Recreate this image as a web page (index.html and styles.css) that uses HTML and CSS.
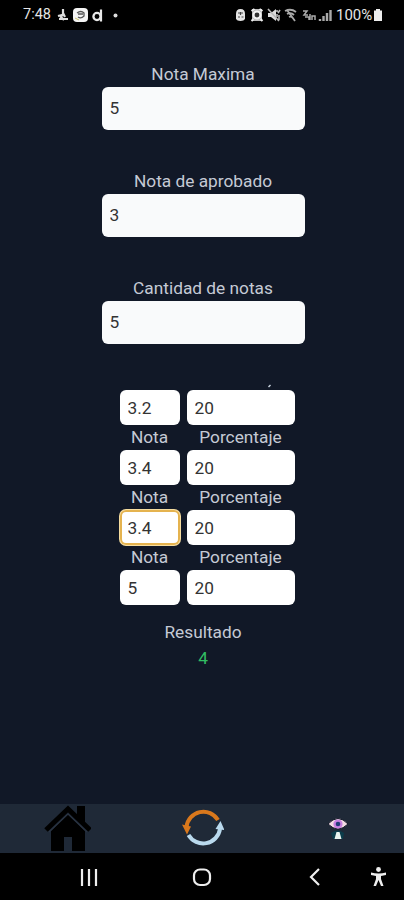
FILE: index.html
```
<!DOCTYPE html>
<html lang="es">
<head>
<meta charset="utf-8">
<title>Calculadora de notas</title>
<link rel="stylesheet" href="styles.css">
</head>
<body>
<header class="status">
  <span class="clock">7:48</span>
  <svg class="left-icons" width="66" height="20" viewBox="0 0 66 20">
    <path d="M8 4v5l-2 3 3 3M3 11l4-1M4 14h9M8 8l2 4" fill="none" stroke="#ddd" stroke-width="2.200"/>
    <rect x="18" y="3" width="15" height="14" rx="4" fill="#f4f4f4"/>
    <path d="M22 8q4-3 7 0v3q-3 3-6 1M23 9h5" fill="none" stroke="#555" stroke-width="1.300"/>
    <path d="M20 13l4 2" stroke="#c8c36a"/>
    <circle cx="42" cy="11.500" r="3.600" fill="none" stroke="#e8e8e8" stroke-width="2.300"/>
    <path d="M46 4.500v12" stroke="#e8e8e8" stroke-width="2.200"/>
    <circle cx="60.500" cy="10.500" r="2" fill="#ddd"/>
  </svg>
  <svg class="right-icons" width="98" height="20" viewBox="0 0 98 20">
    <path d="M1 9q0-5 4.500-5T10 9v5q-1 2-4.500 2T1 14z" fill="#e4e4e4"/>
    <path d="M3 8h5M5.500 7v3M3 12h2M6.500 12h2" stroke="#444" stroke-width="1.200"/>
    <path d="M17 4h10v12H17z" fill="#bbb"/>
    <path d="M16.500 6l3-2M27.500 6l-3-2M18.500 14l-2 2M25.500 14l2 2" stroke="#eee" stroke-width="2"/>
    <circle cx="22" cy="10" r="3.500" fill="#333" stroke="#f4f4f4" stroke-width="2.200"/>
    <path d="M33 8h3l5-4v12l-5-4h-3z" fill="#ddd"/>
    <path d="M33 4l11 12M42 5v2M42 9v3M45 5l-2 3M44 10v5" stroke="#bbb" stroke-width="1.600"/>
    <path d="M50 6q6-3 11 1M52 9q4-2 7 1M54 12q2-1 4 1M52 5l8 11" fill="none" stroke="#aaa" stroke-width="1.800"/>
    <path d="M68 6h4l-3 4h4M70 12h4v3M75 9v6M77 15v-4h3v4" fill="none" stroke="#aaa" stroke-width="1.500"/>
    <path d="M85 16v-2M88.500 16v-5M92 16V8M95.500 16V5" stroke="#aaa" stroke-width="2.400"/>
  </svg>
  <span class="percent">100%</span>
  <svg width="10" height="14" viewBox="0 0 10 14"><path d="M3 1h4v1.500h2V13H1V2.500h2z" fill="#eee"/></svg>
</header>
<main>
  <div class="field"><label for="max">Nota Maxima</label><input id="max" value="5"></div>
  <div class="field"><label for="pass">Nota de aprobado</label><input id="pass" value="3"></div>
  <div class="field"><label for="count">Cantidad de notas</label><input id="count" value="5"></div>
  <section class="grades">
    <div class="clipped"><svg width="6" height="5" viewBox="0 0 6 5"><path d="M1.500 4l2-2" stroke="#cbd5e1" stroke-width="1.500"/></svg></div>
    <div class="row"><input value="3.2" aria-label="Nota"><input value="20" aria-label="Porcentaje"></div>
    <div class="row names"><span>Nota</span><span>Porcentaje</span></div>
    <div class="row"><input value="3.4" aria-label="Nota"><input value="20" aria-label="Porcentaje"></div>
    <div class="row names"><span>Nota</span><span>Porcentaje</span></div>
    <div class="row"><input class="active" value="3.4" aria-label="Nota"><input value="20" aria-label="Porcentaje"></div>
    <div class="row names"><span>Nota</span><span>Porcentaje</span></div>
    <div class="row"><input value="5" aria-label="Nota"><input value="20" aria-label="Porcentaje"></div>
  </section>
  <section class="result"><span>Resultado</span><span class="value">4</span></section>
</main>
<nav class="tabs">
  <svg width="48" height="48" viewBox="0 0 48 48">
    <path d="M34 1h8v17l-8-7z"/>
    <path d="M3 25L25 4l22 21" fill="none" stroke="#000" stroke-width="5"/>
    <path d="M8 26L25 9l17 17v20H29V32h-8v14H8z"/>
    <path d="M6 27L25 9l19 18" fill="none" stroke="#293342" stroke-width="1.200"/>
  </svg>
  <svg width="44" height="44" viewBox="0 0 44 44">
    <path d="M6.500 20A17 17 0 0 1 38 13" fill="none" stroke="#d9781c" stroke-width="4"/>
    <path d="M2 17.500l9 2-4 8z" fill="#d9781c"/>
    <path d="M8.500 28A17 17 0 0 0 40 22" fill="none" stroke="#b9d9ed" stroke-width="4"/>
    <path d="M40.500 14l4 9-9-1z" fill="#b9d9ed"/>
  </svg>
  <svg width="24" height="28" viewBox="0 0 24 28">
    <path d="M3 9q10-11 20 0-10 10-20 0z" fill="#f3dce3" stroke="#101827"/>
    <circle cx="13" cy="9" r="4.600" fill="#c77fe0"/><circle cx="13" cy="9" r="2.300" fill="#233b78"/>
    <path d="M6 18q7-5 13 0l-1 6H8z" fill="#0c3d4b"/>
    <path d="M11.500 17h3l2 7h-7z" fill="#e9f4ef"/>
  </svg>
</nav>
<footer class="system">
  <svg width="404" height="47" viewBox="0 0 404 47" fill="none" stroke="#eee" stroke-width="2.200">
    <path d="M82 16v17M89 16v17M96 16v17"/>
    <rect x="194" y="16.500" width="16" height="15.500" rx="6"/>
    <path d="M319 16l-8 8 8 8"/>
    <circle cx="378.500" cy="16.500" r="2.400" fill="#eee" stroke="none"/>
    <path d="M371 19.500q7.500 2 15 0v2.500l-5 1v3l2.500 7h-2.500l-2.500-6-2.500 6h-2.500l2.500-7v-3l-5-1z" fill="#eee" stroke="none"/>
  </svg>
</footer>
</body>
</html>
```
FILE: styles.css
```
* { box-sizing: border-box; }
body {
  margin: 0;
  width: 404px;
  height: 900px;
  display: flex;
  flex-direction: column;
  overflow: hidden;
  background: #111827;
  color: #c5cad5;
  font: 17.3px/24px Roboto, sans-serif;
}
svg { display: block; flex: none; }
.status {
  height: 30px;
  padding-left: 23px;
  display: flex;
  align-items: center;
  background: #000;
  color: #e5e5e5;
  font-size: 14.5px;
}
.clock { width: 32px; }
.right-icons { margin-left: 114px; }
.percent { width: 37px; margin-left: 3px; font-size: 15px; }
main {
  flex: 1;
  display: flex;
  flex-direction: column;
  align-items: center;
  padding: 32px 0 0 2px;
}
.field {
  width: 203px;
  height: 68px;
  margin-bottom: 39px;
  text-align: center;
}
.field label { display: block; height: 25px; }
input {
  display: block;
  width: 100%;
  height: 35px;
  padding: 0 8px;
  border: 0;
  border-radius: 6px;
  outline: 0;
  background: #fff;
  color: #333;
  font: 17.3px Roboto, sans-serif;
}
.field input { height: 43px; padding-bottom: 2px; background: #f9fafb; }
.grades { width: 175px; margin: 0 0 0 8px; }
.clipped { height: 7px; padding: 0 0 0 147px; }
.row {
  display: grid;
  grid-template-columns: 60px 108px;
  gap: 7px;
  height: 35px;
}
.names { height: 25px; text-align: center; }
.active { box-shadow: 0 0 0 1px #f6dda0, inset 0 0 0 2px #e5b34f; }
.result {
  margin-top: 15px;
  display: flex;
  flex-direction: column;
  align-items: center;
  gap: 2px;
}
.value { color: #32bd63; }
.tabs {
  height: 49px;
  display: grid;
  grid-template-columns: repeat(3, 1fr);
  place-items: center;
  background: #1f2937;
}
.system { height: 47px; background: #000; }
```
